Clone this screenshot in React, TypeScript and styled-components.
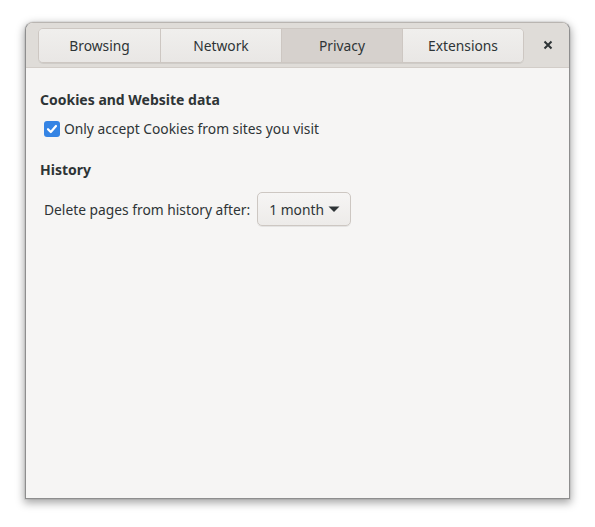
import React from "react";
import styled, { createGlobalStyle } from "styled-components";

const Global = createGlobalStyle`
  html, body { margin: 0; padding: 0; background: #ffffff; }
  body { font-family: "Noto Sans", "Open Sans", sans-serif; }
`;

const Stage = styled.div`
  width: 595px;
  height: 527px;
  padding: 22px 0 0 25px;
  box-sizing: border-box;
`;

const Window = styled.div`
  width: 545px;
  height: 477px;
  box-sizing: border-box;
  display: flex;
  flex-direction: column;
  background: #f6f5f4;
  border: 1px solid #8e8e8e;
  border-top-color: #b9b5b1;
  border-radius: 8px 8px 0 0;
  box-shadow: 0 3px 9px 1px rgba(0, 0, 0, 0.35), 0 0 0 1px rgba(0, 0, 0, 0.05);
  overflow: hidden;
`;

const HeaderBar = styled.div`
  height: 45px;
  flex: none;
  box-sizing: border-box;
  display: flex;
  align-items: center;
  padding: 0 0 0 12px;
  background: #dfdcd8;
  border-bottom: 1px solid #d2cdc8;
`;

const Tabs = styled.div`
  display: flex;
  height: 33px;
  margin-top: 1px;
  border: 1px solid #cdc7c2;
  border-radius: 5px;
  box-shadow: 0 1px 0 rgba(0, 0, 0, 0.07);
  overflow: hidden;
`;

const Tab = styled.div<{ $active?: boolean }>`
  width: 121px;
  box-sizing: border-box;
  display: flex;
  align-items: center;
  justify-content: center;
  font-size: 13.8px;
  color: #2e3436;
  background: ${(p) =>
    p.$active ? "#d6d1cd" : "linear-gradient(#f0efed, #e9e7e5)"};
  & + & {
    border-left: 1px solid #cdc7c2;
  }
`;

const Close = styled.div`
  flex: 1;
  display: flex;
  align-items: center;
  justify-content: center;
  padding-left: 2px;
  color: #2e3436;
`;

const Content = styled.div`
  flex: 1;
  display: flex;
  flex-direction: column;
  padding: 22px 14px 0 14px;
  color: #2e3436;
  font-size: 13.8px;
`;

const Heading = styled.div`
  font-weight: bold;
  font-size: 14px;
  line-height: 20px;
`;

const CheckRow = styled.label`
  display: flex;
  align-items: center;
  gap: 4px;
  margin: 9px 0 0 4px;
  line-height: 20px;
`;

const CheckBox = styled.span`
  width: 16px;
  height: 16px;
  border-radius: 3px;
  background: #3584e4;
  display: flex;
  align-items: center;
  justify-content: center;
`;

const Section = styled.div`
  margin-top: 21px;
`;

const Row = styled.div`
  display: flex;
  align-items: center;
  gap: 7px;
  margin: 12px 0 0 4px;
`;

const Combo = styled.div`
  height: 34px;
  box-sizing: border-box;
  display: flex;
  align-items: center;
  gap: 4px;
  padding: 0 10px 0 11px;
  border: 1px solid #cdc7c2;
  border-radius: 5px;
  background: linear-gradient(#f6f5f4, #edebe9);
  box-shadow: 0 1px 0 rgba(0, 0, 0, 0.07);
`;

export default function App() {
  return (
    <>
      <Global />
      <Stage>
        <Window>
          <HeaderBar>
            <Tabs>
              <Tab>Browsing</Tab>
              <Tab>Network</Tab>
              <Tab $active>Privacy</Tab>
              <Tab>Extensions</Tab>
            </Tabs>
            <Close>
              <svg width="10" height="10" viewBox="0 0 10 10">
                <path d="M1.5 1.5 L8.5 8.5 M8.5 1.5 L1.5 8.5" stroke="#2e3436" strokeWidth="2" />
              </svg>
            </Close>
          </HeaderBar>
          <Content>
            <Heading>Cookies and Website data</Heading>
            <CheckRow>
              <CheckBox>
                <svg width="12" height="12" viewBox="0 0 12 12">
                  <path d="M2 6.2 L4.8 9 L10 3" stroke="#fff" strokeWidth="2.2" fill="none" strokeLinecap="round" strokeLinejoin="round" />
                </svg>
              </CheckBox>
              Only accept Cookies from sites you visit
            </CheckRow>
            <Section>
              <Heading>History</Heading>
              <Row>
                <span>Delete pages from history after:</span>
                <Combo>
                  1 month
                  <svg width="12" height="8" viewBox="0 0 12 8">
                    <path d="M0.5 1.5 L11.5 1.5 L6 7 Z" fill="#2e3436" />
                  </svg>
                </Combo>
              </Row>
            </Section>
          </Content>
        </Window>
      </Stage>
    </>
  );
}
